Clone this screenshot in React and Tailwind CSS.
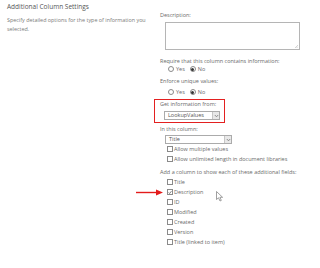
import { useState } from 'react'

const FIELDS = [
  { label: 'Title', checked: false },
  { label: 'Description', checked: true },
  { label: 'ID', checked: false },
  { label: 'Modified', checked: false },
  { label: 'Created', checked: false },
  { label: 'Version', checked: false },
  { label: 'Title (linked to item)', checked: false },
]

const font = { fontFamily: '"Open Sans", "Noto Sans", sans-serif' }

function Box({ checked }) {
  return (
    <span className="w-[6px] h-[6px] border border-[#8a8a8a] bg-white flex items-center justify-center shrink-0">
      {checked && (
        <svg width="5" height="5" viewBox="0 0 5 5">
          <path d="M0.8 2.4 L2 3.8 L4.3 0.8" fill="none" stroke="#555" strokeWidth="0.9" />
        </svg>
      )}
    </span>
  )
}

function Radio({ on }) {
  return (
    <span className="w-[6px] h-[6px] rounded-full border border-[#8a8a8a] bg-white flex items-center justify-center shrink-0">
      {on && <span className="w-[3px] h-[3px] rounded-full bg-[#333]" />}
    </span>
  )
}

function YesNo() {
  return (
    <div className="h-[8px] flex items-center pl-[14px] gap-[1px] text-[5.5px] leading-[8px]">
      <Radio />
      <span className="ml-[1px] mr-[4px]">Yes</span>
      <Radio on />
      <span className="ml-[1px]">No</span>
    </div>
  )
}

function Dropdown({ value, width }) {
  return (
    <div className={`${width} h-[9px] border border-[#ababab] bg-white flex items-center text-[5.5px] text-[#555]`}>
      <span className="flex-1 pl-[3px] leading-[7px]">{value}</span>
      <span className="w-[7px] h-[7px] bg-[#e8e8e8] border-l border-[#c6c6c6] flex items-center justify-center">
        <svg width="5" height="4" viewBox="0 0 5 4">
          <path d="M0.8 1 L2.5 2.8 L4.2 1" fill="none" stroke="#777" strokeWidth="0.8" />
        </svg>
      </span>
    </div>
  )
}

export default function App() {
  const [fields] = useState(FIELDS)

  return (
    <div className="relative w-[320px] h-[268px] bg-white flex overflow-hidden" style={font}>
      <div className="w-[154px] pl-[7px] pt-[3px] text-[#7a7a7a]">
        <h2 className="text-[6.5px] leading-[8px] text-[#555]">Additional Column Settings</h2>
        <p className="mt-[5px] text-[5.4px] leading-[9px] pr-[2px]">
          Specify detailed options for the type of information you selected.
        </p>
      </div>

      <div className="flex-1 flex flex-col text-[5.5px] text-[#6a6a6a]">
        <div className="mt-[11px] pl-[6px] leading-[8px]">Description:</div>
        <div className="mt-[3px] ml-[11px] w-[135px] h-[28px] border border-[#b5b5b5] bg-white relative">
          <svg className="absolute right-[1px] bottom-[1px]" width="4" height="4" viewBox="0 0 4 4">
            <path d="M1 4 L4 1 M2.5 4 L4 2.5" stroke="#aaa" strokeWidth="0.5" />
          </svg>
        </div>
        <div className="mt-[7px] pl-[6px] leading-[8px]">Require that this column contains information:</div>
        <YesNo />
        <div className="mt-[4px] pl-[6px] leading-[8px]">Enforce unique values:</div>
        <div className="mt-[3px]"><YesNo /></div>

        <div className="mt-[3px] w-[71px] border border-[#e32020] pl-[5px] pt-[1px] pb-[2px]">
          <div className="leading-[7px]">Get information from:</div>
          <div className="mt-[3px] ml-[4px]">
            <Dropdown value="LookupValues" width="w-[56px]" />
          </div>
        </div>

        <div className="mt-[2px] pl-[6px] leading-[8px]">In this column:</div>
        <div className="mt-[2px] ml-[11px]">
          <Dropdown value="Title" width="w-[67px]" />
        </div>
        <div className="pl-[13px] flex flex-col">
          <label className="h-[10px] flex items-center gap-[1px]"><Box /><span>Allow multiple values</span></label>
          <label className="h-[10px] flex items-center gap-[1px]"><Box /><span>Allow unlimited length in document libraries</span></label>
        </div>
        <div className="mt-[4px] pl-[6px] leading-[8px]">Add a column to show each of these additional fields:</div>
        <div className="mt-[1px] pl-[13px] flex flex-col">
          {fields.map(f => (
            <label key={f.label} className="h-[10px] flex items-center gap-[1px]">
              <Box checked={f.checked} />
              <span>{f.label}</span>
            </label>
          ))}
        </div>
      </div>

      <svg className="absolute left-[136px] top-[189px]" width="28" height="7" viewBox="0 0 28 7">
        <path d="M0 3.5 H22" stroke="#e31b1b" strokeWidth="1.4" />
        <path d="M20 0.5 L27 3.5 L20 6.5 Z" fill="#e31b1b" />
      </svg>

      <svg className="absolute left-[216px] top-[191px]" width="8" height="11" viewBox="0 0 8 11">
        <path d="M0.5 0.5 L0.5 8.5 L2.5 6.8 L4 10 L5.3 9.4 L3.9 6.3 L6.6 6.3 Z" fill="white" stroke="#777" strokeWidth="0.7" strokeLinejoin="round" />
      </svg>
    </div>
  )
}
